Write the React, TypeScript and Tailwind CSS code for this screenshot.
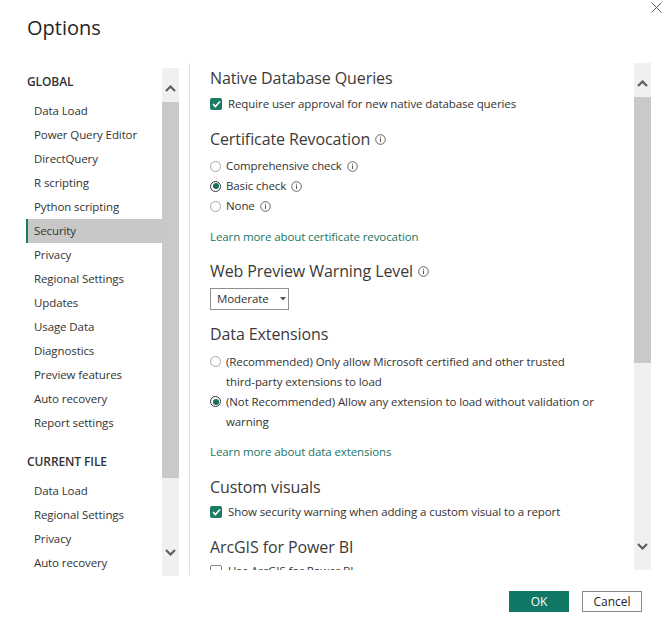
import React from 'react';

const font = { fontFamily: '"Segoe UI", "Open Sans", "Noto Sans", sans-serif' };

function Chevron({ dir }: { dir: 'up' | 'down' }) {
    return (
        <svg width="11" height="7" viewBox="0 0 11 7">
            <path
                d={dir === 'up' ? 'M1 6 L5.5 1.5 L10 6' : 'M1 1 L5.5 5.5 L10 1'}
                fill="none"
                stroke="#5f5f5f"
                strokeWidth="2.2"
            />
        </svg>
    );
}

function ScrollBar({ thumb, rest }: { thumb: number; rest: number }) {
    return (
        <div className="w-[17px] h-full bg-[#f0f0f0] flex flex-col shrink-0">
            <div className="h-[34px] flex items-start justify-center pt-[17px]">
                <Chevron dir="up" />
            </div>
            <div className="bg-[#c9c9c9]" style={{ height: thumb }} />
            <div className="flex-1 flex items-end justify-center pb-[20px]" style={{ minHeight: rest }}>
                <Chevron dir="down" />
            </div>
        </div>
    );
}

function Info() {
    return (
        <svg width="11" height="11" viewBox="0 0 11 11" className="inline-block">
            <circle cx="5.5" cy="5.5" r="4.8" fill="none" stroke="#555" strokeWidth="0.9" />
            <rect x="5" y="4.5" width="1" height="3.5" fill="#555" />
            <rect x="5" y="2.7" width="1" height="1" fill="#555" />
        </svg>
    );
}

function Radio({ checked }: { checked?: boolean }) {
    return (
        <span
            className={`w-[11px] h-[11px] rounded-full border shrink-0 flex items-center justify-center bg-white ${
                checked ? 'border-[#333]' : 'border-[#a6a6a6]'
            }`}
        >
            {checked && <span className="w-[6px] h-[6px] rounded-full bg-[#1a6e5e]" />}
        </span>
    );
}

function Check({ checked }: { checked?: boolean }) {
    return checked ? (
        <span className="w-[12px] h-[12px] rounded-[2px] bg-[#1d7a66] flex items-center justify-center shrink-0">
            <svg width="9" height="8" viewBox="0 0 9 8">
                <path d="M1 4.2 L3.4 6.5 L8 1.5" fill="none" stroke="white" strokeWidth="1.6" />
            </svg>
        </span>
    ) : (
        <span className="w-[12px] h-[12px] rounded-[2px] border border-[#8a8a8a] bg-white shrink-0" />
    );
}

const global = [
    'Data Load',
    'Power Query Editor',
    'DirectQuery',
    'R scripting',
    'Python scripting',
    'Security',
    'Privacy',
    'Regional Settings',
    'Updates',
    'Usage Data',
    'Diagnostics',
    'Preview features',
    'Auto recovery',
    'Report settings',
];
const current = ['Data Load', 'Regional Settings', 'Privacy', 'Auto recovery'];

function NavItem({ label, active }: { label: string; active?: boolean }) {
    return (
        <div
            className={`h-[24px] leading-[24px] whitespace-nowrap ${
                active ? 'bg-[#c8c8c8] border-l-2 border-[#1a7a66] pl-[6px]' : 'pl-[8px]'
            }`}
        >
            {label}
        </div>
    );
}

function Heading({ children, className = '' }: { children: React.ReactNode; className?: string }) {
    return (
        <div
            className={`h-[24px] leading-[24px] text-[16px] tracking-[-0.1px] text-[#3b3a39] flex items-center gap-[5px] whitespace-nowrap ${className}`}
        >
            {children}
        </div>
    );
}

export default function App() {
    return (
        <div className="w-[672px] h-[642px] bg-white relative text-[#333] overflow-hidden" style={font}>
            <svg className="absolute right-[10px] top-[2px]" width="11" height="11" viewBox="0 0 11 11">
                <path d="M0.5 0.5 L10.5 10.5 M10.5 0.5 L0.5 10.5" stroke="#555" strokeWidth="1" />
            </svg>

            <h1 className="pl-[27px] pt-[14px] h-[63px] text-[20px] leading-[28px] text-[#252423]">Options</h1>

            <div className="flex h-[513px] text-[11.5px] tracking-[-0.1px]">
                <div className="flex pl-[26px] pt-[5px] h-full">
                    <div className="w-[136px] h-full overflow-hidden pt-[2px]">
                        <div className="h-[24px] leading-[24px] pl-[1px] text-[12px] font-semibold mb-[5px]">GLOBAL</div>
                        {global.map((l) => (
                            <NavItem key={l} label={l} active={l === 'Security'} />
                        ))}
                        <div className="h-[24px] leading-[24px] pl-[1px] text-[12px] font-semibold mt-[15px] mb-[5px]">
                            CURRENT FILE
                        </div>
                        {current.map((l) => (
                            <NavItem key={'c' + l} label={l} />
                        ))}
                    </div>
                    <ScrollBar thumb={376} rest={98} />
                </div>
                <div className="ml-[10px] w-px h-[512px] bg-[#e1e1e1]" />

                <div className="flex flex-1 h-[507px]">
                    <div className="w-[444px] h-full overflow-hidden pl-[20px] pt-[3px]">
                        <Heading>Native Database Queries</Heading>
                        <div className="h-[20px] mt-[4px] flex items-center gap-[6px]">
                            <Check checked />
                            <span>Require user approval for new native database queries</span>
                        </div>

                        <Heading className="mt-[13px]">
                            Certificate Revocation <Info />
                        </Heading>
                        <div className="mt-[5px]">
                            {[
                                ['Comprehensive check', false],
                                ['Basic check', true],
                                ['None', false],
                            ].map(([l, c]) => (
                                <div key={l as string} className="h-[20px] flex items-center gap-[5px]">
                                    <Radio checked={c as boolean} />
                                    <span>{l as string}</span>
                                    <Info />
                                </div>
                            ))}
                        </div>
                        <div className="h-[20px] leading-[20px] mt-[11px] text-[#1b7565]">
                            Learn more about certificate revocation
                        </div>

                        <Heading className="mt-[12px]">
                            Web Preview Warning Level <Info />
                        </Heading>
                        <div className="mt-[5px] w-[79px] h-[22px] border border-[#8f8f8f] flex items-center pl-[6px] gap-[11px]">
                            <span>Moderate</span>
                            <svg width="6" height="4" viewBox="0 0 6 4">
                                <path d="M0 0 L6 0 L3 3.5 Z" fill="#555" />
                            </svg>
                        </div>

                        <Heading className="mt-[12px]">Data Extensions</Heading>
                        <div className="mt-[6px]">
                            <div className="flex items-start gap-[5px] leading-[20px]">
                                <span className="mt-[4px]">
                                    <Radio />
                                </span>
                                <span className="whitespace-nowrap">
                                    (Recommended) Only allow Microsoft certified and other trusted
                                    <br />
                                    third-party extensions to load
                                </span>
                            </div>
                            <div className="flex items-start gap-[5px] leading-[20px]">
                                <span className="mt-[4px]">
                                    <Radio checked />
                                </span>
                                <span className="whitespace-nowrap">
                                    (Not Recommended) Allow any extension to load without validation or
                                    <br />
                                    warning
                                </span>
                            </div>
                        </div>
                        <div className="h-[20px] leading-[20px] mt-[10px] text-[#1b7565]">Learn more about data extensions</div>

                        <Heading className="mt-[13px]">Custom visuals</Heading>
                        <div className="h-[20px] mt-[3px] flex items-center gap-[6px]">
                            <Check checked />
                            <span>Show security warning when adding a custom visual to a report</span>
                        </div>

                        <Heading className="mt-[13px]">ArcGIS for Power BI</Heading>
                        <div className="h-[20px] mt-[2px] flex items-center gap-[6px]">
                            <Check />
                            <span>Use ArcGIS for Power BI</span>
                        </div>
                    </div>
                    <ScrollBar thumb={266} rest={180} />
                </div>
            </div>

            <div className="flex justify-end gap-[13px] pr-[30px] pt-[15px] text-[12px]">
                <button className="w-[60px] h-[21px] bg-[#117865] text-white">OK</button>
                <button className="w-[60px] h-[21px] border border-[#8a8a8a] text-[#252423]">Cancel</button>
            </div>
        </div>
    );
}
